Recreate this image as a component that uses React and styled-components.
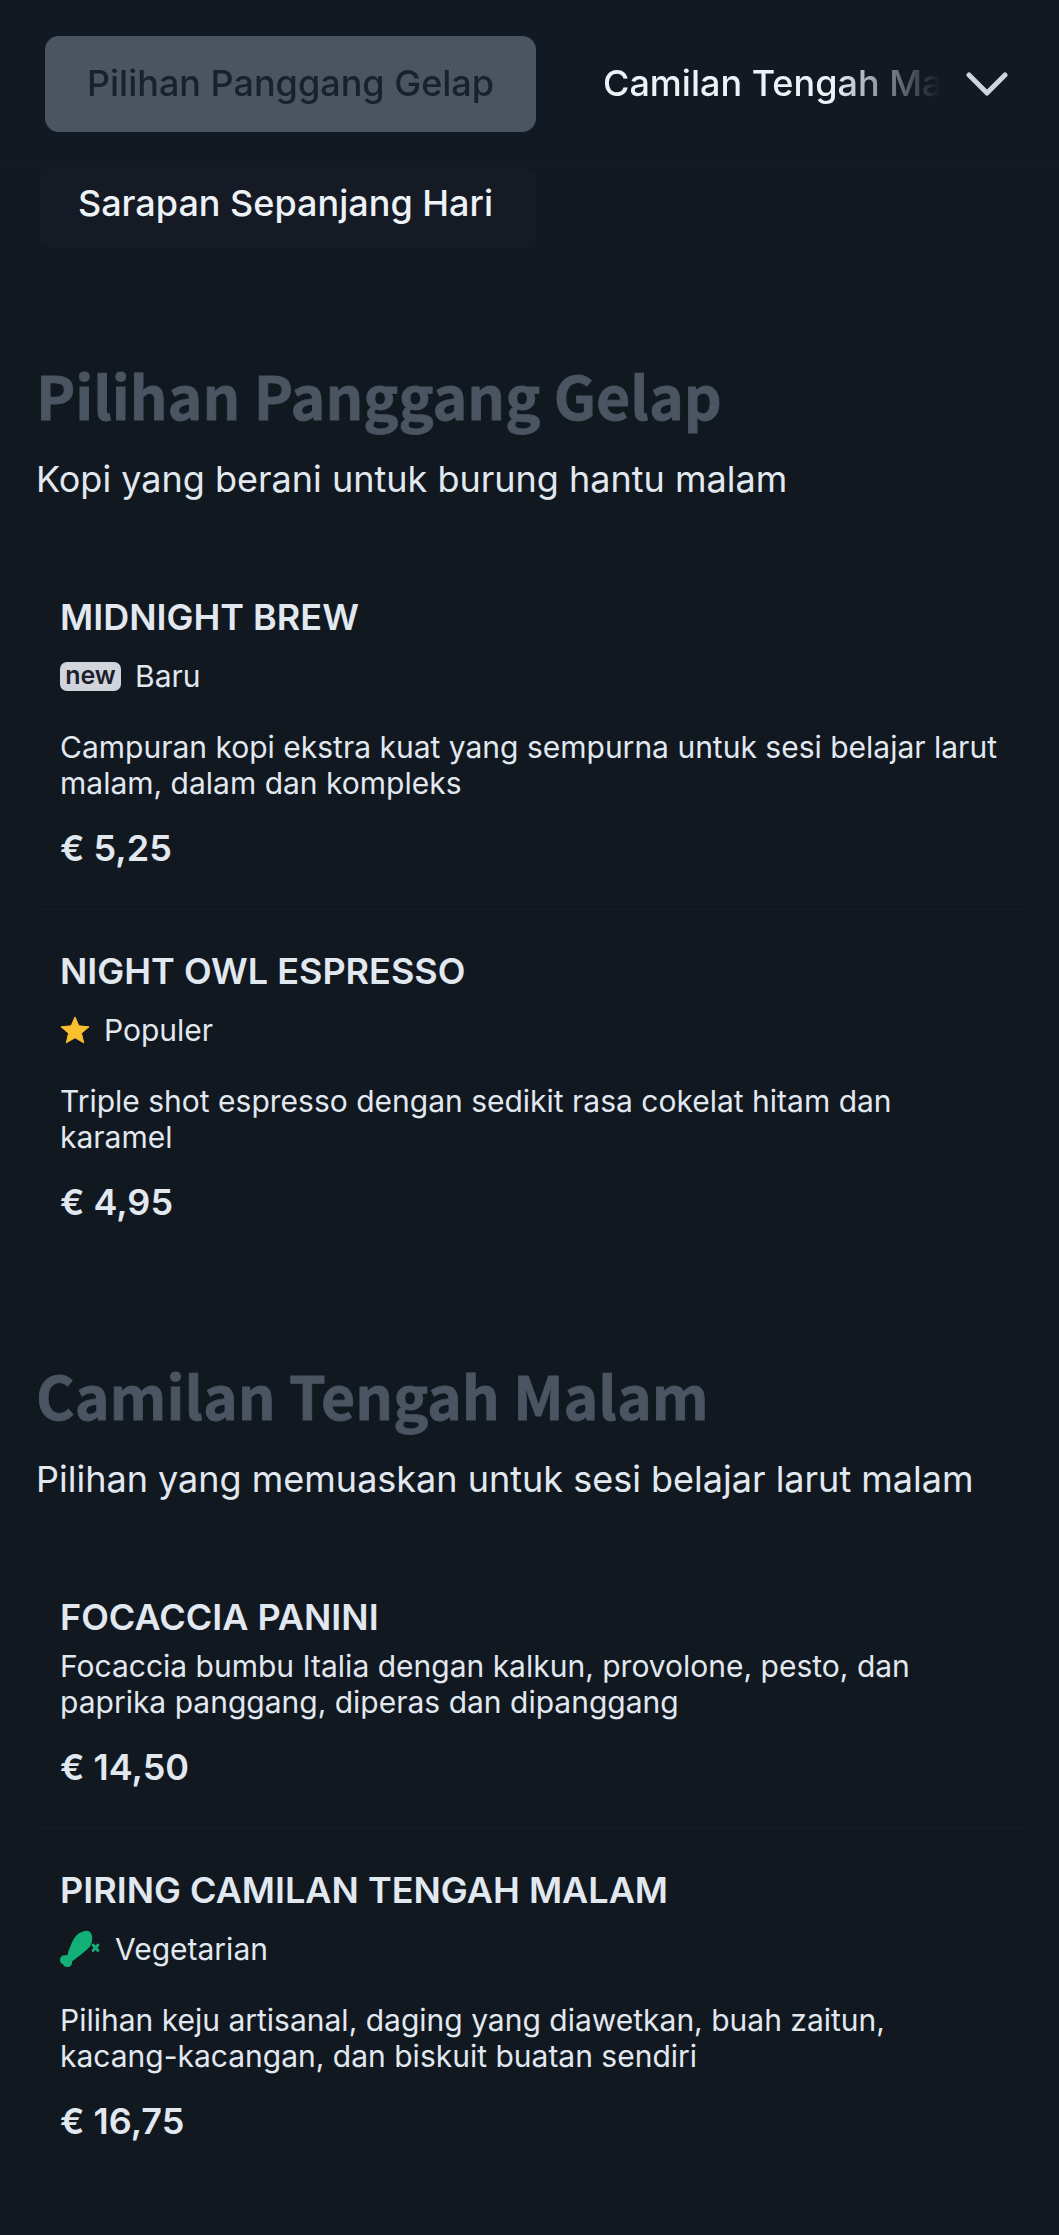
import styled, { createGlobalStyle } from 'styled-components';

const GlobalStyle = createGlobalStyle`
  html, body {
    margin: 0;
    padding: 0;
    background-color: #111820;
  }

  * {
    box-sizing: border-box;
  }
`;

const sections = [
  {
    title: 'Pilihan Panggang Gelap',
    subtitle: 'Kopi yang berani untuk burung hantu malam',
    items: [
      {
        name: 'MIDNIGHT BREW',
        tag: { kind: 'new', label: 'Baru' },
        description:
          'Campuran kopi ekstra kuat yang sempurna untuk sesi belajar larut malam, dalam dan kompleks',
        price: '€ 5,25',
      },
      {
        name: 'NIGHT OWL ESPRESSO',
        tag: { kind: 'star', label: 'Populer' },
        description:
          'Triple shot espresso dengan sedikit rasa cokelat hitam dan karamel',
        price: '€ 4,95',
      },
    ],
  },
  {
    title: 'Camilan Tengah Malam',
    subtitle: 'Pilihan yang memuaskan untuk sesi belajar larut malam',
    items: [
      {
        name: 'FOCACCIA PANINI',
        description:
          'Focaccia bumbu Italia dengan kalkun, provolone, pesto, dan paprika panggang, diperas dan dipanggang',
        price: '€ 14,50',
      },
      {
        name: 'PIRING CAMILAN TENGAH MALAM',
        tag: { kind: 'veg', label: 'Vegetarian' },
        description:
          'Pilihan keju artisanal, daging yang diawetkan, buah zaitun, kacang-kacangan, dan biskuit buatan sendiri',
        price: '€ 16,75',
      },
    ],
  },
];

const StarIcon = () => (
  <svg width='30' height='30' viewBox='0 0 31 30'>
    <path
      d='M15.5 1.5l4 9.200 10.500 1-7.800 6.600 2.300 10-9-5.300-9 5.300 2.300-10-7.800-6.600 10.500-1z'
      fill='#fbc02d'
      stroke='#fbc02d'
      strokeWidth='1'
      strokeLinejoin='round'
    />
  </svg>
);

const DrumstickIcon = () => (
  <svg width='41' height='38' viewBox='0 0 41 38'>
    <path
      d='M27 .7C31 1 33 6 32 10.500 31.500 14 30.500 16.500 28 18.500 25 21.500 17 27.500 12 31.500c.5 3-1.500 5.500-4.300 5.500-2.700 0-4.200-.8-4.400-2.500C1 34 0 32 0 30c0-3 2-4.800 4.500-4.800 1.500 0 2.500 0 3.200-.5 .5-3 1.300-5.700 2.800-8.700 1.500-4 3-7 5-9.500C18 3.500 21 1.500 27 .7z'
      fill='#12b076'
    />
    <path
      d='M33 15l5 5.500M38 15l-5 5.500'
      stroke='#12b076'
      strokeWidth='2.800'
      strokeLinecap='round'
    />
  </svg>
);

const renderTagIcon = (kind) => {
  if (kind === 'new') return <NewBadge>new</NewBadge>;
  if (kind === 'star') return <StarIcon />;
  return <DrumstickIcon />;
};

const App = () => {
  return (
    <Page>
      <GlobalStyle />
      <Nav>
        <Tabs>
          <ActiveTab>Pilihan Panggang Gelap</ActiveTab>
          <FadedTab>Camilan Tengah Malam</FadedTab>
        </Tabs>
        <Chevron width='42' height='24' viewBox='0 0 42 24'>
          <polyline points='3,3 21,21 39,3' />
        </Chevron>
      </Nav>
      <OverflowTab>Sarapan Sepanjang Hari</OverflowTab>
      {sections.map((section) => (
        <Section key={section.title}>
          <Title>{section.title}</Title>
          <Subtitle>{section.subtitle}</Subtitle>
          <ItemList>
            {section.items.map((item) => (
              <Item key={item.name}>
                <ItemName>{item.name}</ItemName>
                {item.tag && (
                  <TagRow>
                    {renderTagIcon(item.tag.kind)}
                    <span>{item.tag.label}</span>
                  </TagRow>
                )}
                <Description $tagged={!!item.tag}>{item.description}</Description>
                <Price>{item.price}</Price>
              </Item>
            ))}
          </ItemList>
        </Section>
      ))}
    </Page>
  );
};

const Page = styled.div`
  width: 1059px;
  height: 2235px;
  overflow: hidden;
  background-color: #111820;
  color: #e2e8f0;
  font-family: Inter, 'Liberation Sans', sans-serif;
`;

const Nav = styled.div`
  display: flex;
  align-items: center;
  height: 168px;
  padding: 0 51px 0 45px;
  background-color: #121922;
  border-bottom: 1px solid #151c25;
`;

const Tabs = styled.div`
  display: flex;
  align-items: center;
  gap: 67px;
  width: 896px;
  overflow: hidden;
  white-space: nowrap;
  mask-image: linear-gradient(to right, #000 790px, transparent 896px);
`;

const ActiveTab = styled.div`
  flex: none;
  display: flex;
  align-items: center;
  justify-content: center;
  width: 491px;
  height: 96px;
  padding-bottom: 2px;
  border-radius: 14px;
  background-color: #4a5561;
  color: #1a202c;
  font-size: 36px;
  font-weight: 500;
`;

const FadedTab = styled.div`
  flex: none;
  padding-bottom: 2px;
  color: #edf2f7;
  font-size: 36px;
  font-weight: 500;
`;

const Chevron = styled.svg`
  flex: none;
  margin-left: auto;
  fill: none;
  stroke: #d1d5db;
  stroke-width: 5;
  stroke-linecap: round;
  stroke-linejoin: round;
`;

const OverflowTab = styled.div`
  display: flex;
  align-items: center;
  justify-content: flex-end;
  width: 498px;
  height: 80px;
  margin-left: 39px;
  padding: 0 44px 11px 0;
  background-color: #151a24;
  border-radius: 8px;
  color: #edf2f7;
  font-size: 36px;
  font-weight: 500;
`;

const Section = styled.section`
  padding: 0 36px;
  margin-top: 99px;

  & + & {
    margin-top: 84px;
  }
`;

const Title = styled.h2`
  margin: 0;
  color: #4a5561;
  font-family: 'Noto Sans CJK SC', 'Noto Sans', sans-serif;
  font-size: 59px;
  font-weight: 700;
  line-height: 96px;
  -webkit-text-stroke: 0.8px #4a5561;
`;

const Subtitle = styled.p`
  margin: 11px 0 0;
  color: #e2e8f0;
  font-size: 36px;
  line-height: 50px;
`;

const ItemList = styled.div`
  margin-top: 51px;
  border-top: 1px solid #141b24;
`;

const Item = styled.article`
  padding: 40px 24px 40px;

  & + & {
    border-top: 1px solid #171e27;
  }
`;

const ItemName = styled.h3`
  margin: 0;
  color: #e2e8f0;
  font-size: 36px;
  font-weight: 600;
  line-height: 42px;
`;

const TagRow = styled.div`
  display: flex;
  align-items: center;
  gap: 14px;
  margin-top: 18px;
  color: #e2e8f0;
  font-size: 30px;
  line-height: 40px;
`;

const NewBadge = styled.span`
  display: inline-flex;
  align-items: center;
  justify-content: center;
  width: 61px;
  height: 29px;
  padding-bottom: 2px;
  border-radius: 7px;
  background-color: #d1d5db;
  color: #1a202c;
  font-size: 25px;
  font-weight: 600;
`;

const Description = styled.p`
  margin: ${({ $tagged }) => ($tagged ? '33px' : '10px')} 0 0;
  color: #e2e8f0;
  font-size: 30px;
  line-height: 36px;
`;

const Price = styled.div`
  margin-top: 26px;
  color: #e2e8f0;
  font-size: 36px;
  font-weight: 600;
  line-height: 42px;
`;

export default App;
